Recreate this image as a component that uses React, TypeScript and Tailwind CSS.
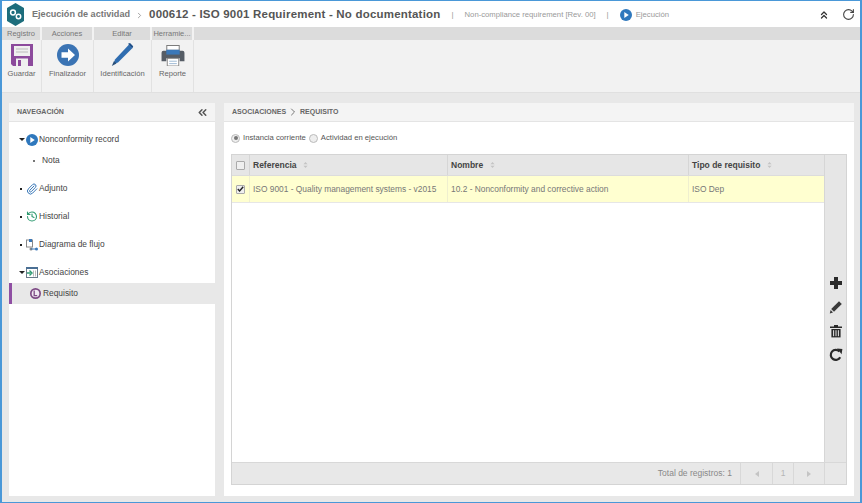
import { ChevronRight, ChevronsLeft, ChevronsUp, RotateCw, Paperclip, History } from 'lucide-react';
import type { ReactNode } from 'react';

const font = { fontFamily: '"Liberation Sans", Arial, sans-serif' };

function PlayCircle({ size = 14 }: { size?: number }) {
  return (
    <svg width={size} height={size} viewBox="0 0 14 14" className="shrink-0">
      <circle cx="7" cy="7" r="7" fill="#2f78bd" />
      <path d="M5 3.6 10.2 7 5 10.4Z" fill="#fff" />
    </svg>
  );
}

function SortIcon() {
  return (
    <svg width="5" height="6" viewBox="0 0 6 7" className="ml-[7px] shrink-0">
      <path d="M3 0 5.5 2.6H.5ZM3 7 .5 4.4h5Z" fill="#c4c4c4" />
    </svg>
  );
}

function ToolGroup({ label, width, tool, icon }: { label: string; width: number; tool: string; icon: ReactNode }) {
  return (
    <div className="flex flex-col shrink-0 h-full" style={{ width }}>
      <div className="h-[13px] bg-[#dcdcdc] flex items-center justify-center text-[7.5px] text-[#777] whitespace-nowrap mr-[2px]">{label}</div>
      <div className="flex-1 border-r border-[#e2e2e2] flex flex-col items-center pt-[3px] text-[7.6px] text-[#666]">
        <div className="h-[24px] flex items-center justify-center">{icon}</div>
        <span className="mt-[1px]">{tool}</span>
      </div>
    </div>
  );
}

function NavRow({ bullet, icon, label, arrow }: { bullet?: boolean; arrow?: boolean; icon?: ReactNode; label: string }) {
  return (
    <div className="h-[21px] flex items-center pl-[9px] text-[8.4px] text-[#444]">
      <span className="w-[8px] flex justify-start pl-[1px] items-center">
        {arrow && <span className="w-0 h-0 border-l-[3px] border-r-[3px] border-t-[3px] border-l-transparent border-r-transparent border-t-[#222]" />}
        {bullet && <span className="w-[2px] h-[2px] bg-[#222] ml-[1px]" />}
      </span>
      <span className="w-[12px] h-[14px] flex items-center justify-center mr-[1px]">{icon}</span>
      <span>{label}</span>
    </div>
  );
}

export default function App() {
  return (
    <div style={font} className="w-[862px] h-[503px] bg-[#e8e8e8] border-x-[2px] border-y border-[#4a98d8] flex flex-col overflow-hidden">
      {/* title bar */}
      <div className="h-[26px] bg-white flex items-center shrink-0 pl-[5px] pr-[5px]">
        <svg width="17" height="23" viewBox="0 0 17 23" className="shrink-0 mt-[1px]">
          <path d="M8.5 0 17 5v13l-8.5 5L0 18V5Z" fill="#1d6d7c" />
          <circle cx="6" cy="9.5" r="2.4" fill="none" stroke="#fff" strokeWidth="1.5" />
          <circle cx="11.5" cy="13.5" r="2.2" fill="none" stroke="#fff" strokeWidth="1.5" />
        </svg>
        <span className="ml-[8px] mt-[2px] text-[9.1px] font-bold text-[#777]">Ejecución de actividad</span>
        <ChevronRight size={9} strokeWidth={2} className="mx-[5px] mt-[2px] text-[#888]" />
        <span className="mt-[1px] text-[11.5px] font-bold text-[#555] tracking-[0.2px]">000612 - ISO 9001 Requirement - No documentation</span>
        <span className="ml-[11px] mt-[2px] text-[8px] text-[#999]">|</span>
        <span className="ml-[11px] mt-[2px] text-[7.7px] text-[#999]">Non-compliance requirement [Rev. 00]</span>
        <span className="ml-[11px] mt-[2px] text-[8px] text-[#999]">|</span>
        <span className="ml-[11px] mt-[2px]"><PlayCircle size={12} /></span>
        <span className="ml-[4px] mt-[2px] text-[7.7px] text-[#999]">Ejecución</span>
        <div className="ml-auto mt-[1px] flex items-center gap-[12px]">
          <ChevronsUp size={12} strokeWidth={2.6} className="text-[#333]" />
          <RotateCw size={13} strokeWidth={2} className="text-[#444]" />
        </div>
      </div>

      {/* toolbar */}
      <div className="h-[66px] shrink-0 flex bg-[#f2f2f2] border-b border-[#e0e0e0]">
        <ToolGroup
          label="Registro"
          width={40}
          tool="Guardar"
          icon={
            <svg width="22" height="22" viewBox="0 0 22 22">
              <path d="M0 0h22v22H2l-2-2Z" fill="#8c4a9c" />
              <rect x="3" y="2" width="16" height="10" fill="#efefef" />
              <path d="M5 5h12M5 8h12" stroke="#bbb" strokeWidth="1" />
              <rect x="5" y="14.5" width="12" height="7.5" fill="#efefef" />
              <rect x="7" y="16" width="3" height="6" fill="#8c4a9c" />
            </svg>
          }
        />
        <ToolGroup
          label="Acciones"
          width={52}
          tool="Finalizador"
          icon={
            <svg width="22" height="22" viewBox="0 0 22 22">
              <circle cx="11" cy="11" r="11" fill="#3b74b4" />
              <path d="M4.5 8.3h6.5V4.6L18 11l-7 6.4v-3.7H4.5Z" fill="#fff" />
            </svg>
          }
        />
        <ToolGroup
          label="Editar"
          width={58}
          tool="Identificación"
          icon={
            <svg width="23" height="24" viewBox="0 0 23 24">
              <path d="M18 1.5 21.5 5 7 19.5 2.5 21 4 16.5Z" fill="#2f6db0" />
              <path d="M.8 23 3 18l2.5 2.6Z" fill="#2a4f78" />
              <path d="M17 .8 19 0l3.2 3.2-.8 2Z" fill="#1f4f88" />
            </svg>
          }
        />
        <ToolGroup
          label="Herramie..."
          width={42}
          tool="Reporte"
          icon={
            <svg width="24" height="21" viewBox="0 0 24 22">
              <rect x="5.5" y="0.5" width="13" height="5" fill="#fff" stroke="#777" />
              <path d="M2 6h20a2 2 0 0 1 2 2v9h-5v-3H5v3H0V8a2 2 0 0 1 2-2Z" fill="#565d66" />
              <rect x="5" y="5" width="14" height="5" fill="#3b78b8" />
              <rect x="6" y="14" width="12" height="8" fill="#fff" stroke="#888" />
              <path d="M8 17h8M8 19.5h8" stroke="#9bb8d4" />
            </svg>
          }
        />
        <div className="flex-1 h-[13px] bg-[#dcdcdc]" />
      </div>

      {/* body */}
      <div className="flex-1 min-h-0 flex gap-[9px] pt-[10px] pl-[7px] pr-[6px] pb-[6px]">
        {/* navigation */}
        <div className="w-[206px] shrink-0 bg-white flex flex-col">
          <div className="h-[19px] bg-[#f4f4f4] border-b border-[#e4e4e4] flex items-center justify-between pl-[8px] pr-[6px] shrink-0">
            <span className="text-[7px] font-bold text-[#666]">NAVEGACIÓN</span>
            <ChevronsLeft size={13} strokeWidth={2.8} className="text-[#555]" />
          </div>
          <div className="pt-[7px]">
            <NavRow arrow icon={<PlayCircle size={12} />} label="Nonconformity record" />
            <div className="h-[21px] flex items-center pl-[24px] text-[8.4px] text-[#444]">
              <span className="w-[2px] h-[2px] bg-[#777] mr-[7px]" />
              Nota
            </div>
            <div className="h-[7px]" />
            <NavRow bullet icon={<Paperclip size={12} strokeWidth={2} className="text-[#3a78b8]" />} label="Adjunto" />
            <div className="h-[7px]" />
            <NavRow bullet icon={<History size={13} strokeWidth={2.2} className="text-[#2e9a70]" />} label="Historial" />
            <div className="h-[7px]" />
            <NavRow
              bullet
              icon={
                <svg width="12" height="12" viewBox="0 0 12 12">
                  <rect x="0.5" y="1" width="6" height="7" fill="none" stroke="#888" />
                  <rect x="3" y="0" width="3" height="3" fill="#3a78b8" />
                  <circle cx="5" cy="10" r="1.5" fill="#888" />
                  <path d="M5 10h5" stroke="#3a78b8" />
                  <circle cx="10.5" cy="10" r="1.5" fill="#3a78b8" />
                </svg>
              }
              label="Diagrama de flujo"
            />
            <div className="h-[7px]" />
            <NavRow
              arrow
              icon={
                <svg width="12" height="11" viewBox="0 0 12 11">
                  <rect x="0.5" y="0.5" width="11" height="10" fill="#fff" stroke="#6a7a88" />
                  <rect x="0" y="0" width="12" height="2" fill="#4a6f94" />
                  <path d="M1 6h3.5M3.5 3.6 6 6 3.5 8.4" fill="none" stroke="#2e9a70" strokeWidth="1.4" />
                  <path d="M7.5 3.5v6M9.5 3.5v6" stroke="#bbb" />
                </svg>
              }
              label="Asociaciones"
            />
            <div className="h-[21px] flex items-center bg-[#e8e8e8] border-l-[3px] border-[#8f4fa3] pl-[18px] text-[8.4px] text-[#444]">
              <svg width="11" height="11" viewBox="0 0 11 11" className="mr-[2px]">
                <circle cx="5.5" cy="5.5" r="5.5" fill="#7d4a85" />
                <circle cx="5.5" cy="5.5" r="3.8" fill="#f0e8f2" />
                <path d="M4.2 2.6v5h3" fill="none" stroke="#7d4a85" strokeWidth="1.3" />
              </svg>
              Requisito
            </div>
          </div>
        </div>

        {/* content */}
        <div className="flex-1 min-w-0 bg-white flex flex-col">
          <div className="h-[19px] bg-[#f4f4f4] border-b border-[#e4e4e4] flex items-center pl-[8px] shrink-0 text-[7px] font-bold text-[#666]">
            ASOCIACIONES
            <ChevronRight size={12} strokeWidth={1.6} className="mx-[1px] text-[#555]" />
            REQUISITO
          </div>

          <div className="h-[32px] flex items-center pl-[7px] text-[7.7px] text-[#555] shrink-0">
            <span className="w-[9px] h-[9px] rounded-full border border-[#bbb] bg-[#eee] flex items-center justify-center mr-[3px]">
              <span className="w-[4px] h-[4px] rounded-full bg-[#777]" />
            </span>
            Instancia corriente
            <span className="w-[9px] h-[9px] rounded-full border border-[#bbb] bg-[#eee] ml-[3px] mr-[3px]" />
            Actividad en ejecución
          </div>

          <div className="flex-1 min-h-0 ml-[7px] mr-[7px] mb-[11px] border border-[#d4d4d4] flex flex-col">
            <div className="flex-1 min-h-0 flex">
              <div className="flex-1 min-w-0 flex flex-col">
                <div className="h-[21px] bg-[#e6e6e6] border-b border-[#dcdcdc] flex text-[8.5px] font-bold text-[#444] shrink-0">
                  <div className="w-[18px] flex items-center justify-center border-r border-[#d6d6d6]">
                    <span className="w-[9px] h-[9px] border border-[#aaa] bg-[#efefef] rounded-[1px]" />
                  </div>
                  <div className="w-[198px] flex items-center pl-[3px] border-r border-[#d6d6d6]">Referencia<SortIcon /></div>
                  <div className="w-[241px] flex items-center pl-[3px] border-r border-[#d6d6d6]">Nombre<SortIcon /></div>
                  <div className="flex-1 flex items-center pl-[3px]">Tipo de requisito<SortIcon /></div>
                </div>
                <div className="h-[27px] bg-[#ffffd0] border-b border-[#e6e6e6] flex text-[8.4px] text-[#777] shrink-0">
                  <div className="w-[18px] flex items-center justify-center border-r border-[#efefcf]">
                    <span className="w-[9px] h-[9px] border border-[#aaa] bg-[#efefef] rounded-[1px] flex items-center justify-center">
                      <svg width="7" height="6" viewBox="0 0 7 6"><path d="M.8 3 2.6 5 6.2.8" fill="none" stroke="#222" strokeWidth="1.4" /></svg>
                    </span>
                  </div>
                  <div className="w-[198px] flex items-center pl-[3px] border-r border-[#efefcf] whitespace-nowrap">ISO 9001 - Quality management systems - v2015</div>
                  <div className="w-[241px] flex items-center pl-[3px] border-r border-[#efefcf]">10.2 - Nonconformity and corrective action</div>
                  <div className="flex-1 flex items-center pl-[3px]">ISO Dep</div>
                </div>
              </div>
              <div className="w-[22px] shrink-0 bg-[#e6e6e6] border-l border-[#d6d6d6] flex flex-col items-center justify-end gap-[10px] pb-[100px]">
                <svg width="14" height="14" viewBox="0 0 14 14"><path d="M5 1h4v4h4v4H9v4H5V9H1V5h4Z" fill="#2a2a2a" /></svg>
                <svg width="14" height="14" viewBox="0 0 14 14">
                  <path d="M10 1.2 12.8 4 5 11.8 2.2 9Z" fill="#3a3a3a" />
                  <path d="M1.6 10 4 12.4.8 13.4Z" fill="#3a3a3a" />
                </svg>
                <svg width="14" height="14" viewBox="0 0 14 14">
                  <path d="M1 2.6h12v1.4H1ZM5 1h4v1.6H5Z" fill="#2a2a2a" />
                  <path d="M2.4 5h9.2v8.4H2.4Z" fill="#2a2a2a" />
                  <path d="M4.6 6.2v6M7 6.2v6M9.4 6.2v6" stroke="#e6e6e6" />
                </svg>
                <svg width="14" height="14" viewBox="0 0 14 14">
                  <path d="M11.2 9.2A5 5 0 1 1 10.4 3.4" fill="none" stroke="#2a2a2a" strokeWidth="2.2" />
                  <path d="M8 .4 13.4 1 12.6 6.2Z" fill="#2a2a2a" />
                </svg>
              </div>
            </div>
            <div className="h-[22px] shrink-0 bg-[#e8e8e8] border-t border-[#d8d8d8] flex items-center justify-end text-[8.5px] text-[#888]">
              <span className="mr-[8px]">Total de registros: 1</span>
              <div className="h-full w-[32px] border-l border-[#d8d8d8] flex items-center justify-center">
                <span className="w-0 h-0 border-y-[3px] border-r-[4px] border-y-transparent border-r-[#c4c4c4]" />
              </div>
              <div className="h-full w-[21px] border-l border-[#d8d8d8] flex items-center justify-center text-[#b5b5b5]">1</div>
              <div className="h-full w-[31px] border-l border-[#d8d8d8] flex items-center justify-center">
                <span className="w-0 h-0 border-y-[3px] border-l-[4px] border-y-transparent border-l-[#c4c4c4]" />
              </div>
              <div className="h-full w-[22px] border-l border-[#d8d8d8]" />
            </div>
          </div>
        </div>
      </div>
    </div>
  );
}
